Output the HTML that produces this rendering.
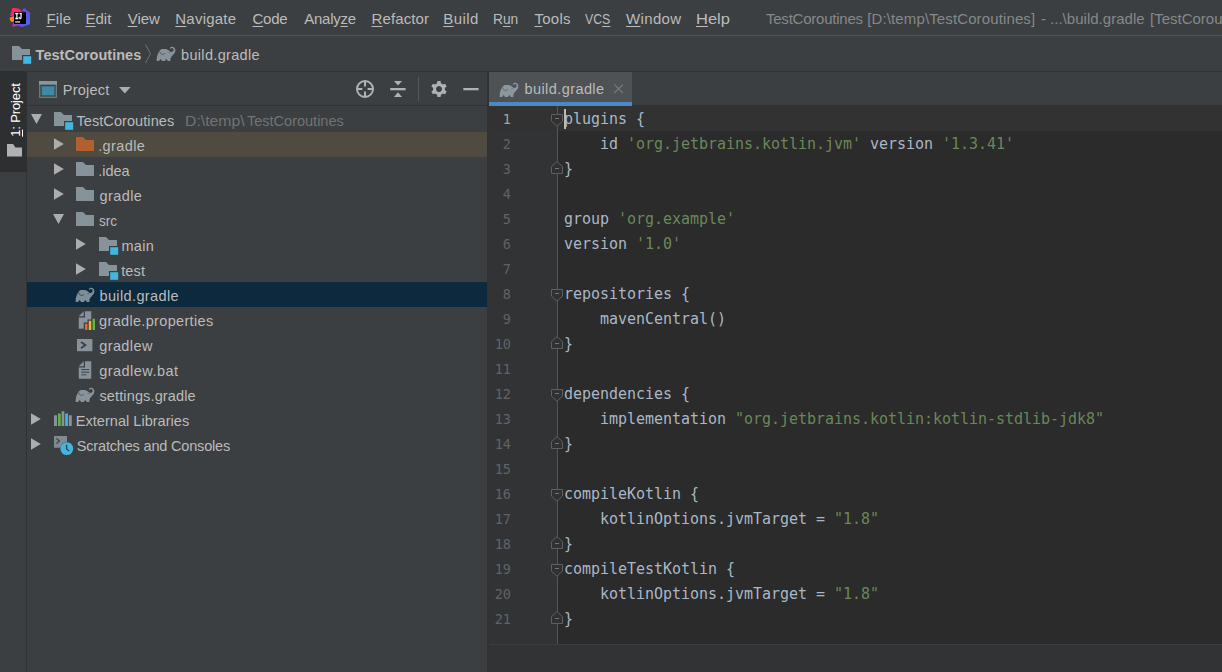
<!DOCTYPE html>
<html lang="en"><head><meta charset="utf-8"><title>TestCoroutines - build.gradle</title>
<style>
html,body{margin:0;padding:0;}
body{width:1222px;height:672px;overflow:hidden;background:#3c3f41;position:relative;
 font-family:"Liberation Sans", sans-serif;font-size:14.5px;color:#bbbbbb;}
.a{position:absolute;}
.t{position:absolute;white-space:pre;display:block;}
svg{position:absolute;overflow:visible;}
u{text-decoration:underline;text-decoration-thickness:1px;text-underline-offset:1.5px;}
.code{font-family:"DejaVu Sans Mono","Liberation Mono",monospace;font-size:15px;color:#a9b7c6;letter-spacing:-0.031px;}
.s{color:#6a8759;}
.ln{font-family:"DejaVu Sans Mono","Liberation Mono",monospace;font-size:13.5px;color:#606366;text-align:right;width:40px;}
</style></head><body>
<div class="a" style="left:0;top:35px;width:1222px;height:1px;background:#515557"></div><div class="a" style="left:0;top:71px;width:1222px;height:1px;background:#323232"></div><div class="a" style="left:26px;top:72px;width:1px;height:600px;background:#323232"></div><div class="a" style="left:0;top:71px;width:27px;height:101px;background:#2d2f30"></div><div class="a" style="left:27px;top:71px;width:1px;height:1px;background:#3c3f41"></div><div class="a" style="left:27px;top:105px;width:460px;height:1px;background:#323232"></div><div class="a" style="left:27px;top:132px;width:460px;height:25px;background:#4f4b41"></div><div class="a" style="left:27px;top:282px;width:460px;height:25px;background:#0d293e"></div><div class="a" style="left:487px;top:72px;width:2px;height:600px;background:#323232"></div><div class="a" style="left:489px;top:105px;width:733px;height:540px;background:#2b2b2b"></div><div class="a" style="left:489px;top:105px;width:68px;height:540px;background:#313335"></div><div class="a" style="left:489px;top:105px;width:733px;height:26px;background:#323232"></div><div class="a" style="left:557px;top:106px;width:1px;height:538px;background:#555555"></div><div class="a" style="left:489px;top:644px;width:733px;height:1px;background:#3c3f41"></div><div class="a" style="left:489px;top:645px;width:733px;height:27px;background:#313335"></div><div class="a" style="left:489px;top:72px;width:143px;height:34px;background:#4e5254"></div><div class="a" style="left:489px;top:102px;width:143px;height:4px;background:#4a88c7"></div><svg style="left:9px;top:7px;will-change:transform" width="22" height="21" viewBox="0 0 22 21"><defs><linearGradient id="g1" x1="0" y1="0" x2="0" y2="1"><stop offset="0" stop-color="#fe2857"/><stop offset="1" stop-color="#e2269a"/></linearGradient><linearGradient id="g2" x1="0" y1="0" x2="1" y2="1"><stop offset="0" stop-color="#3b6cf4"/><stop offset="0.5" stop-color="#6a4be0"/><stop offset="1" stop-color="#3377f4"/></linearGradient><linearGradient id="g3" x1="0" y1="0" x2="1" y2="0"><stop offset="0" stop-color="#c030c8"/><stop offset="1" stop-color="#5a50e8"/></linearGradient></defs><path d="M3.5 0.8 L9.7 1.5 L13 4.2 L13 9 L5 10.5 L1 8.4 Z" fill="url(#g1)"/><path d="M0.8 10.4 L5 9.6 L5 14.6 L2.6 15 L0.8 13 Z" fill="#fc801d"/><path d="M5 14 L3 19.8 L9.5 18.6 L13 20 L17 17 L5 14Z" fill="url(#g3)"/><path d="M14.9 1 L20.9 5.5 L20.9 17.3 L12.9 20 L9.3 18.7 L17 15 L17 5 L13 4 Z" fill="url(#g2)"/><rect x="5" y="5.3" width="12" height="11.7" fill="#000"/><rect x="6.1" y="14.2" width="5" height="1.5" fill="#bdbdbd"/><text x="5.9" y="11.8" font-family="Liberation Mono, monospace" font-weight="bold" font-size="8.6" fill="#fff" stroke="#fff" stroke-width="0.25" textLength="7.3" lengthAdjust="spacingAndGlyphs">IJ</text></svg><svg style="left:12px;top:46px" width="20" height="18" viewBox="0 0 20 18"><path d="M0 0 H7 L10 3 H18 V9 H10 V14 H0 Z" fill="#87939a"/><rect x="11.2" y="10.2" width="8" height="7.6" fill="#40b6e0"/></svg><svg style="left:145px;top:44px" width="7" height="20" viewBox="0 0 7 20"><path d="M0.5 0.5 L5.5 9.8 L0.5 19" fill="none" stroke="#6d7173" stroke-width="1"/></svg><svg style="left:156px;top:46px" width="20" height="16" viewBox="0 0 20 16"><path d="M0.7 15.1 C0.3 12 1.4 8 2.8 5.9 C3.7 4.3 4.7 3.1 6.3 3 L9.9 3.1 C11.6 3.3 13.2 5 14.6 5.7 C15.8 6.2 17 5.6 17.5 4.6 C18 3.3 17.2 2.1 15.9 2.0 C15.3 2.0 14.8 2.4 14.6 3 L13.8 2 C14.5 1 15.5 0.7 16.4 0.8 C18.6 1.1 19.8 3.2 19.3 5.3 C18.8 7.6 16.4 9.4 15.2 11 C14.6 11.8 14.4 12.8 14.4 13.6 L14.4 15.1 L11.9 15.1 L10.3 13.1 L8.8 15.1 L6.2 15.1 L4.5 13.1 L3 15.1 Z" fill="#87929a"/><path d="M3.7 5.4 C4.4 8.6 6.8 9.5 8.9 7.2" fill="none" stroke="#3c3f41" stroke-width="0.8" stroke-opacity="0.8"/><ellipse cx="13.1" cy="6.5" rx="0.8" ry="0.45" fill="#3c3f41" fill-opacity="0.7"/></svg><svg style="left:7px;top:144px" width="15" height="13" viewBox="0 0 15 13"><path d="M0 0 H6 L8.5 3.6 H15 V12.6 H0 Z" fill="#afb1b3"/></svg><svg style="left:39px;top:81px" width="18" height="17" viewBox="0 0 18 17"><rect x="0" y="0" width="18" height="17" fill="#6c777e"/><rect x="0" y="0" width="18" height="3.6" fill="#8a959c"/><rect x="1.4" y="3.8" width="15.2" height="11.8" fill="#3c3f41"/><rect x="2.7" y="5.2" width="12.8" height="9.2" fill="#3f89a6"/></svg><svg style="left:119px;top:87px" width="12" height="7" viewBox="0 0 12 7"><path d="M0 0 H11.6 L5.8 6.6 Z" fill="#adadad"/></svg><svg style="left:356px;top:80px" width="18" height="18" viewBox="0 0 18 18"><circle cx="9" cy="9" r="8" fill="none" stroke="#afb1b3" stroke-width="2"/><path d="M9 1 V6.4 M9 11.6 V17 M1 9 H6.4 M11.6 9 H17" stroke="#afb1b3" stroke-width="2" fill="none"/></svg><svg style="left:390px;top:81px" width="16" height="16" viewBox="0 0 16 16"><rect x="0.2" y="7" width="15.4" height="2.3" fill="#afb1b3"/><path d="M4 0 H12 L8 4.6 Z" fill="#afb1b3"/><path d="M4 16 H12 L8 11.3 Z" fill="#afb1b3"/></svg><div class="a" style="left:418px;top:77px;width:1px;height:24px;background:#555758"></div><svg style="left:431px;top:81px" width="16" height="16" viewBox="0 0 16 16"><path d="M6.11 2.30 L6.39 0.06 L9.61 0.06 L9.89 2.30 L11.99 3.52 L14.07 2.64 L15.68 5.42 L13.88 6.79 L13.88 9.21 L15.68 10.58 L14.07 13.36 L11.99 12.48 L9.89 13.70 L9.61 15.94 L6.39 15.94 L6.11 13.70 L4.01 12.48 L1.93 13.36 L0.32 10.58 L2.12 9.21 L2.12 6.79 L0.32 5.42 L1.93 2.64 L4.01 3.52 Z M8 5 A3 3 0 1 0 8.01 5 Z" fill="#afb1b3" fill-rule="evenodd"/></svg><svg style="left:463px;top:87px" width="16" height="4" viewBox="0 0 16 4"><rect x="0.3" y="1" width="15.3" height="2.3" fill="#afb1b3"/></svg><svg style="left:31px;top:114px" width="11" height="10" viewBox="0 0 11 10"><path d="M0 0 H11 L5.5 10 Z" fill="#adadad"/></svg><svg style="left:54px;top:112px" width="20" height="18" viewBox="0 0 20 18"><path d="M0 0 H7 L10 3 H18 V9 H10 V14 H0 Z" fill="#87939a"/><rect x="11.2" y="10.2" width="8" height="7.6" fill="#40b6e0"/></svg><svg style="left:54px;top:139px" width="10" height="11" viewBox="0 0 10 11"><path d="M0 -0.7 L9.8 5 L0 10.7 Z" fill="#adadad"/></svg><svg style="left:76px;top:137.4px" width="18" height="14" viewBox="0 0 18 14"><path d="M0 0 H7 L10 3 H18 V14 H0 Z" fill="#b35f2f"/></svg><svg style="left:54px;top:164px" width="10" height="11" viewBox="0 0 10 11"><path d="M0 -0.7 L9.8 5 L0 10.7 Z" fill="#adadad"/></svg><svg style="left:76px;top:162.4px" width="18" height="14" viewBox="0 0 18 14"><path d="M0 0 H7 L10 3 H18 V14 H0 Z" fill="#87939a"/></svg><svg style="left:54px;top:189px" width="10" height="11" viewBox="0 0 10 11"><path d="M0 -0.7 L9.8 5 L0 10.7 Z" fill="#adadad"/></svg><svg style="left:76px;top:187.4px" width="18" height="14" viewBox="0 0 18 14"><path d="M0 0 H7 L10 3 H18 V14 H0 Z" fill="#87939a"/></svg><svg style="left:53px;top:214px" width="11" height="10" viewBox="0 0 11 10"><path d="M0 0 H11 L5.5 10 Z" fill="#adadad"/></svg><svg style="left:76px;top:212.4px" width="18" height="14" viewBox="0 0 18 14"><path d="M0 0 H7 L10 3 H18 V14 H0 Z" fill="#87939a"/></svg><svg style="left:76px;top:239px" width="10" height="11" viewBox="0 0 10 11"><path d="M0 -0.7 L9.8 5 L0 10.7 Z" fill="#adadad"/></svg><svg style="left:99px;top:237px" width="20" height="18" viewBox="0 0 20 18"><path d="M0 0 H7 L10 3 H18 V9 H10 V14 H0 Z" fill="#87939a"/><rect x="11.2" y="10.2" width="8" height="7.6" fill="#40b6e0"/></svg><svg style="left:76px;top:264px" width="10" height="11" viewBox="0 0 10 11"><path d="M0 -0.7 L9.8 5 L0 10.7 Z" fill="#adadad"/></svg><svg style="left:99px;top:262px" width="20" height="18" viewBox="0 0 20 18"><path d="M0 0 H7 L10 3 H18 V9 H10 V14 H0 Z" fill="#87939a"/><rect x="11.2" y="10.2" width="8" height="7.6" fill="#40b6e0"/></svg><svg style="left:75px;top:287px" width="20" height="16" viewBox="0 0 20 16"><path d="M0.7 15.1 C0.3 12 1.4 8 2.8 5.9 C3.7 4.3 4.7 3.1 6.3 3 L9.9 3.1 C11.6 3.3 13.2 5 14.6 5.7 C15.8 6.2 17 5.6 17.5 4.6 C18 3.3 17.2 2.1 15.9 2.0 C15.3 2.0 14.8 2.4 14.6 3 L13.8 2 C14.5 1 15.5 0.7 16.4 0.8 C18.6 1.1 19.8 3.2 19.3 5.3 C18.8 7.6 16.4 9.4 15.2 11 C14.6 11.8 14.4 12.8 14.4 13.6 L14.4 15.1 L11.9 15.1 L10.3 13.1 L8.8 15.1 L6.2 15.1 L4.5 13.1 L3 15.1 Z" fill="#7e8e99"/><path d="M3.7 5.4 C4.4 8.6 6.8 9.5 8.9 7.2" fill="none" stroke="#0d293e" stroke-width="0.8" stroke-opacity="0.8"/><ellipse cx="13.1" cy="6.5" rx="0.8" ry="0.45" fill="#0d293e" fill-opacity="0.7"/></svg><svg style="left:75.3px;top:310px" width="20" height="20" viewBox="0 0 16 16"><path d="M7 1 L3 5 H7 Z" fill="#87929a"/><path d="M8 1 V6 H3 V15 H7 V10 H10 V7.5 H13 V1 Z" fill="#87929a"/><rect x="8" y="11" width="2" height="5" fill="#f26522"/><rect x="11" y="8.6" width="2" height="7.4" fill="#f4af3d"/><rect x="14" y="7" width="2" height="9" fill="#62b543"/></svg><svg style="left:76.9px;top:339px" width="16" height="13" viewBox="0 0 16 13"><rect x="0" y="0" width="15.4" height="12.2" fill="#87929a"/><path d="M4 2.9 L8.4 6.1 L4 9.3" fill="none" stroke="#3c3f41" stroke-width="1.8"/></svg><svg style="left:75.3px;top:360px" width="20" height="20" viewBox="0 0 16 16"><path d="M7 1 L3 5 H7 Z" fill="#87929a"/><path d="M8 1 V6 H3 V15 H13 V1 Z" fill="#87929a"/><rect x="5" y="7.2" width="6.4" height="0.9" fill="#3c3f41" fill-opacity="0.85"/><rect x="5" y="9.3" width="6.4" height="0.9" fill="#3c3f41" fill-opacity="0.85"/><rect x="5" y="11.4" width="4.2" height="0.9" fill="#3c3f41" fill-opacity="0.85"/></svg><svg style="left:75px;top:387px" width="20" height="16" viewBox="0 0 20 16"><path d="M0.7 15.1 C0.3 12 1.4 8 2.8 5.9 C3.7 4.3 4.7 3.1 6.3 3 L9.9 3.1 C11.6 3.3 13.2 5 14.6 5.7 C15.8 6.2 17 5.6 17.5 4.6 C18 3.3 17.2 2.1 15.9 2.0 C15.3 2.0 14.8 2.4 14.6 3 L13.8 2 C14.5 1 15.5 0.7 16.4 0.8 C18.6 1.1 19.8 3.2 19.3 5.3 C18.8 7.6 16.4 9.4 15.2 11 C14.6 11.8 14.4 12.8 14.4 13.6 L14.4 15.1 L11.9 15.1 L10.3 13.1 L8.8 15.1 L6.2 15.1 L4.5 13.1 L3 15.1 Z" fill="#87929a"/><path d="M3.7 5.4 C4.4 8.6 6.8 9.5 8.9 7.2" fill="none" stroke="#3c3f41" stroke-width="0.8" stroke-opacity="0.8"/><ellipse cx="13.1" cy="6.5" rx="0.8" ry="0.45" fill="#3c3f41" fill-opacity="0.7"/></svg><svg style="left:31px;top:414px" width="10" height="11" viewBox="0 0 10 11"><path d="M0 -0.7 L9.8 5 L0 10.7 Z" fill="#adadad"/></svg><svg style="left:54px;top:411px" width="18" height="15" viewBox="0 0 18 15"><rect x="0" y="4.3" width="3" height="10.7" fill="#87939a"/><rect x="4" y="2.5" width="2.7" height="12.5" fill="#62b543"/><rect x="7.6" y="0.2" width="2.7" height="14.8" fill="#87939a"/><rect x="11.2" y="2.5" width="2.7" height="12.5" fill="#40b6e0"/><rect x="14.8" y="4.3" width="3" height="10.7" fill="#87939a"/></svg><svg style="left:31px;top:439px" width="10" height="11" viewBox="0 0 10 11"><path d="M0 -0.7 L9.8 5 L0 10.7 Z" fill="#adadad"/></svg><svg style="left:54px;top:436px" width="20" height="19" viewBox="0 0 20 19"><path d="M0 0 H13 V6 A6.8 6.8 0 0 0 6.4 11.8 H0 Z" fill="#7f8b91"/><path d="M2.4 2.4 L5.4 5 L2.4 7.6" fill="none" stroke="#3c3f41" stroke-width="1.2"/><circle cx="12.8" cy="12.6" r="6.4" fill="#40b6e0"/><path d="M12.6 8.8 V13 L15.2 15" fill="none" stroke="#3c3f41" stroke-width="1.3"/></svg><svg style="left:499px;top:81.5px" width="20" height="16" viewBox="0 0 20 16"><path d="M0.7 15.1 C0.3 12 1.4 8 2.8 5.9 C3.7 4.3 4.7 3.1 6.3 3 L9.9 3.1 C11.6 3.3 13.2 5 14.6 5.7 C15.8 6.2 17 5.6 17.5 4.6 C18 3.3 17.2 2.1 15.9 2.0 C15.3 2.0 14.8 2.4 14.6 3 L13.8 2 C14.5 1 15.5 0.7 16.4 0.8 C18.6 1.1 19.8 3.2 19.3 5.3 C18.8 7.6 16.4 9.4 15.2 11 C14.6 11.8 14.4 12.8 14.4 13.6 L14.4 15.1 L11.9 15.1 L10.3 13.1 L8.8 15.1 L6.2 15.1 L4.5 13.1 L3 15.1 Z" fill="#8b969d"/><path d="M3.7 5.4 C4.4 8.6 6.8 9.5 8.9 7.2" fill="none" stroke="#4e5254" stroke-width="0.8" stroke-opacity="0.8"/><ellipse cx="13.1" cy="6.5" rx="0.8" ry="0.45" fill="#4e5254" fill-opacity="0.7"/></svg><svg style="left:613.5px;top:84.2px" width="10" height="10" viewBox="0 0 10 10"><path d="M0.3 0.3 L9 9 M9 0.3 L0.3 9" stroke="#777c7f" stroke-width="1.1" fill="none"/></svg><svg style="left:551px;top:114px" width="12" height="13" viewBox="0 0 12 13"><path d="M0.5 0.5 H11.5 V7.2 L6 12.2 L0.5 7.2 Z" fill="#2f3133" stroke="#5d5f61" stroke-width="1"/><path d="M4 4.5 H8" stroke="#737577" stroke-width="1"/></svg><svg style="left:551px;top:289px" width="12" height="13" viewBox="0 0 12 13"><path d="M0.5 0.5 H11.5 V7.2 L6 12.2 L0.5 7.2 Z" fill="#2f3133" stroke="#5d5f61" stroke-width="1"/><path d="M4 4.5 H8" stroke="#737577" stroke-width="1"/></svg><svg style="left:551px;top:389px" width="12" height="13" viewBox="0 0 12 13"><path d="M0.5 0.5 H11.5 V7.2 L6 12.2 L0.5 7.2 Z" fill="#2f3133" stroke="#5d5f61" stroke-width="1"/><path d="M4 4.5 H8" stroke="#737577" stroke-width="1"/></svg><svg style="left:551px;top:489px" width="12" height="13" viewBox="0 0 12 13"><path d="M0.5 0.5 H11.5 V7.2 L6 12.2 L0.5 7.2 Z" fill="#2f3133" stroke="#5d5f61" stroke-width="1"/><path d="M4 4.5 H8" stroke="#737577" stroke-width="1"/></svg><svg style="left:551px;top:564px" width="12" height="13" viewBox="0 0 12 13"><path d="M0.5 0.5 H11.5 V7.2 L6 12.2 L0.5 7.2 Z" fill="#2f3133" stroke="#5d5f61" stroke-width="1"/><path d="M4 4.5 H8" stroke="#737577" stroke-width="1"/></svg><svg style="left:551px;top:160.5px" width="12" height="13" viewBox="0 0 12 13"><path d="M0.5 12.5 H11.5 V5.6 L6 0.6 L0.5 5.6 Z" fill="#2f3133" stroke="#5d5f61" stroke-width="1"/><path d="M4 7.5 H8" stroke="#737577" stroke-width="1"/></svg><svg style="left:551px;top:335.5px" width="12" height="13" viewBox="0 0 12 13"><path d="M0.5 12.5 H11.5 V5.6 L6 0.6 L0.5 5.6 Z" fill="#2f3133" stroke="#5d5f61" stroke-width="1"/><path d="M4 7.5 H8" stroke="#737577" stroke-width="1"/></svg><svg style="left:551px;top:435.5px" width="12" height="13" viewBox="0 0 12 13"><path d="M0.5 12.5 H11.5 V5.6 L6 0.6 L0.5 5.6 Z" fill="#2f3133" stroke="#5d5f61" stroke-width="1"/><path d="M4 7.5 H8" stroke="#737577" stroke-width="1"/></svg><svg style="left:551px;top:535.5px" width="12" height="13" viewBox="0 0 12 13"><path d="M0.5 12.5 H11.5 V5.6 L6 0.6 L0.5 5.6 Z" fill="#2f3133" stroke="#5d5f61" stroke-width="1"/><path d="M4 7.5 H8" stroke="#737577" stroke-width="1"/></svg><svg style="left:551px;top:610.5px" width="12" height="13" viewBox="0 0 12 13"><path d="M0.5 12.5 H11.5 V5.6 L6 0.6 L0.5 5.6 Z" fill="#2f3133" stroke="#5d5f61" stroke-width="1"/><path d="M4 7.5 H8" stroke="#737577" stroke-width="1"/></svg><div class="a" style="left:564px;top:109px;width:2px;height:20px;background:#bbbbbb"></div><span id="m_file" class="t menu" style="left:46.4px;top:6px;height:26px;line-height:26px;letter-spacing:0.157px;font-size:15px;"><u>F</u>ile</span><span id="m_edit" class="t menu" style="left:85.5px;top:6px;height:26px;line-height:26px;letter-spacing:0.007px;font-size:15px;"><u>E</u>dit</span><span id="m_view" class="t menu" style="left:127.7px;top:6px;height:26px;line-height:26px;letter-spacing:-0.036px;font-size:15px;"><u>V</u>iew</span><span id="m_nav" class="t menu" style="left:175.3px;top:6px;height:26px;line-height:26px;letter-spacing:0.220px;font-size:15px;"><u>N</u>avigate</span><span id="m_code" class="t menu" style="left:252.5px;top:6px;height:26px;line-height:26px;letter-spacing:-0.239px;font-size:15px;"><u>C</u>ode</span><span id="m_an" class="t menu" style="left:304.2px;top:6px;height:26px;line-height:26px;letter-spacing:-0.237px;font-size:15px;">Analy<u>z</u>e</span><span id="m_ref" class="t menu" style="left:371.5px;top:6px;height:26px;line-height:26px;letter-spacing:0.115px;font-size:15px;"><u>R</u>efactor</span><span id="m_build" class="t menu" style="left:443.3px;top:6px;height:26px;line-height:26px;letter-spacing:0.422px;font-size:15px;"><u>B</u>uild</span><span id="m_run" class="t menu" style="left:493.08px;top:6px;height:26px;line-height:26px;letter-spacing:0.000px;transform:scaleX(0.9169);transform-origin:0 0;font-size:15px;">R<u>u</u>n</span><span id="m_tools" class="t menu" style="left:534.5px;top:6px;height:26px;line-height:26px;letter-spacing:0.246px;font-size:15px;"><u>T</u>ools</span><span id="m_vcs" class="t menu" style="left:585.2px;top:6px;height:26px;line-height:26px;letter-spacing:0.000px;transform:scaleX(0.8204);transform-origin:0 0;font-size:15px;">VC<u>S</u></span><span id="m_win" class="t menu" style="left:626px;top:6px;height:26px;line-height:26px;letter-spacing:0.357px;font-size:15px;"><u>W</u>indow</span><span id="m_help" class="t menu" style="left:696.2px;top:6px;height:26px;line-height:26px;letter-spacing:0.000px;transform:scaleX(1.098);transform-origin:0 0;font-size:15px;"><u>H</u>elp</span><span id="title1" class="t " style="left:766px;top:6px;height:26px;line-height:26px;letter-spacing:-0.235px;font-size:15px;color:#868889;">TestCoroutines</span><span id="title2" class="t " style="left:867.2px;top:6px;height:26px;line-height:26px;letter-spacing:0.126px;font-size:15px;color:#868889;">[D:\temp\TestCoroutines]</span><span id="title3" class="t " style="left:1041px;top:6px;height:26px;line-height:26px;font-size:15px;color:#868889;">-</span><span id="title4" class="t " style="left:1050px;top:6px;height:26px;line-height:26px;letter-spacing:0.028px;font-size:15px;color:#868889;">...\build.gradle</span><span id="title5" class="t " style="left:1150px;top:6px;height:26px;line-height:26px;font-size:15px;color:#868889;">[TestCoroutines] - IntelliJ IDEA</span><span id="nav1" class="t " style="left:35.6px;top:43px;height:25px;line-height:25px;letter-spacing:0.031px;font-weight:bold;">TestCoroutines</span><span id="nav2" class="t " style="left:181px;top:43px;height:25px;line-height:25px;letter-spacing:0.327px;">build.gradle</span><span id="strip" class="t" style="left:-22px;top:98px;width:76px;height:24px;line-height:24px;font-size:13px;letter-spacing:-0.15px;color:#fff;transform:rotate(-90deg);text-align:center;"><u>1</u>: Project</span><span id="ph" class="t " style="left:62.8px;top:78px;height:25px;line-height:25px;letter-spacing:0.233px;">Project</span><span id="t1" class="t " style="left:76.4px;top:109px;height:25px;line-height:25px;letter-spacing:0.087px;">TestCoroutines</span><span id="t2" class="t " style="left:98.2px;top:134px;height:25px;line-height:25px;letter-spacing:0.388px;">.gradle</span><span id="t3" class="t " style="left:98.2px;top:159px;height:25px;line-height:25px;letter-spacing:-0.020px;">.idea</span><span id="t4" class="t " style="left:99.6px;top:184px;height:25px;line-height:25px;letter-spacing:0.391px;">gradle</span><span id="t5" class="t " style="left:99.2px;top:209px;height:25px;line-height:25px;letter-spacing:0.000px;transform:scaleX(0.933);transform-origin:0 0;">src</span><span id="t6" class="t " style="left:121.4px;top:234px;height:25px;line-height:25px;letter-spacing:0.312px;">main</span><span id="t7" class="t " style="left:121.2px;top:259px;height:25px;line-height:25px;letter-spacing:0.152px;">test</span><span id="t8" class="t " style="left:99.5px;top:284px;height:25px;line-height:25px;letter-spacing:0.372px;">build.gradle</span><span id="t9" class="t " style="left:99.1px;top:309px;height:25px;line-height:25px;letter-spacing:0.327px;">gradle.properties</span><span id="t10" class="t " style="left:99.2px;top:334px;height:25px;line-height:25px;letter-spacing:0.399px;">gradlew</span><span id="t11" class="t " style="left:99.2px;top:359px;height:25px;line-height:25px;letter-spacing:0.476px;">gradlew.bat</span><span id="t12" class="t " style="left:99.4px;top:384px;height:25px;line-height:25px;letter-spacing:0.140px;">settings.gradle</span><span id="t13" class="t " style="left:75.8px;top:409px;height:25px;line-height:25px;letter-spacing:0.031px;">External Libraries</span><span id="t14" class="t " style="left:76.8px;top:434px;height:25px;line-height:25px;letter-spacing:-0.177px;">Scratches and Consoles</span><span id="t1b" class="t " style="left:184.81px;top:109px;height:25px;line-height:25px;letter-spacing:0.000px;transform:scaleX(1.0865);transform-origin:0 0;color:#717374;">D:\temp\</span><span id="t1c" class="t " style="left:247px;top:109px;height:25px;line-height:25px;letter-spacing:0.003px;color:#717374;">TestCoroutines</span><span id="tab" class="t " style="left:524.5px;top:77px;height:25px;line-height:25px;letter-spacing:0.418px;">build.gradle</span><span class="t ln" style="left:471px;top:107px;height:25px;line-height:25px;color:#a4a3a3;">1</span><span class="t code" style="left:564px;top:107px;height:25px;line-height:25px;">plugins {</span><span class="t ln" style="left:471px;top:132px;height:25px;line-height:25px;">2</span><span class="t code" style="left:564px;top:132px;height:25px;line-height:25px;">    id <span class="s">'org.jetbrains.kotlin.jvm'</span> version <span class="s">'1.3.41'</span></span><span class="t ln" style="left:471px;top:157px;height:25px;line-height:25px;">3</span><span class="t code" style="left:564px;top:157px;height:25px;line-height:25px;">}</span><span class="t ln" style="left:471px;top:182px;height:25px;line-height:25px;">4</span><span class="t ln" style="left:471px;top:207px;height:25px;line-height:25px;">5</span><span class="t code" style="left:564px;top:207px;height:25px;line-height:25px;">group <span class="s">'org.example'</span></span><span class="t ln" style="left:471px;top:232px;height:25px;line-height:25px;">6</span><span class="t code" style="left:564px;top:232px;height:25px;line-height:25px;">version <span class="s">'1.0'</span></span><span class="t ln" style="left:471px;top:257px;height:25px;line-height:25px;">7</span><span class="t ln" style="left:471px;top:282px;height:25px;line-height:25px;">8</span><span class="t code" style="left:564px;top:282px;height:25px;line-height:25px;">repositories {</span><span class="t ln" style="left:471px;top:307px;height:25px;line-height:25px;">9</span><span class="t code" style="left:564px;top:307px;height:25px;line-height:25px;">    mavenCentral()</span><span class="t ln" style="left:471px;top:332px;height:25px;line-height:25px;">10</span><span class="t code" style="left:564px;top:332px;height:25px;line-height:25px;">}</span><span class="t ln" style="left:471px;top:357px;height:25px;line-height:25px;">11</span><span class="t ln" style="left:471px;top:382px;height:25px;line-height:25px;">12</span><span class="t code" style="left:564px;top:382px;height:25px;line-height:25px;">dependencies {</span><span class="t ln" style="left:471px;top:407px;height:25px;line-height:25px;">13</span><span class="t code" style="left:564px;top:407px;height:25px;line-height:25px;">    implementation <span class="s">"org.jetbrains.kotlin:kotlin-stdlib-jdk8"</span></span><span class="t ln" style="left:471px;top:432px;height:25px;line-height:25px;">14</span><span class="t code" style="left:564px;top:432px;height:25px;line-height:25px;">}</span><span class="t ln" style="left:471px;top:457px;height:25px;line-height:25px;">15</span><span class="t ln" style="left:471px;top:482px;height:25px;line-height:25px;">16</span><span class="t code" style="left:564px;top:482px;height:25px;line-height:25px;">compileKotlin {</span><span class="t ln" style="left:471px;top:507px;height:25px;line-height:25px;">17</span><span class="t code" style="left:564px;top:507px;height:25px;line-height:25px;">    kotlinOptions.jvmTarget = <span class="s">"1.8"</span></span><span class="t ln" style="left:471px;top:532px;height:25px;line-height:25px;">18</span><span class="t code" style="left:564px;top:532px;height:25px;line-height:25px;">}</span><span class="t ln" style="left:471px;top:557px;height:25px;line-height:25px;">19</span><span class="t code" style="left:564px;top:557px;height:25px;line-height:25px;">compileTestKotlin {</span><span class="t ln" style="left:471px;top:582px;height:25px;line-height:25px;">20</span><span class="t code" style="left:564px;top:582px;height:25px;line-height:25px;">    kotlinOptions.jvmTarget = <span class="s">"1.8"</span></span><span class="t ln" style="left:471px;top:607px;height:25px;line-height:25px;">21</span><span class="t code" style="left:564px;top:607px;height:25px;line-height:25px;">}</span></body></html>
